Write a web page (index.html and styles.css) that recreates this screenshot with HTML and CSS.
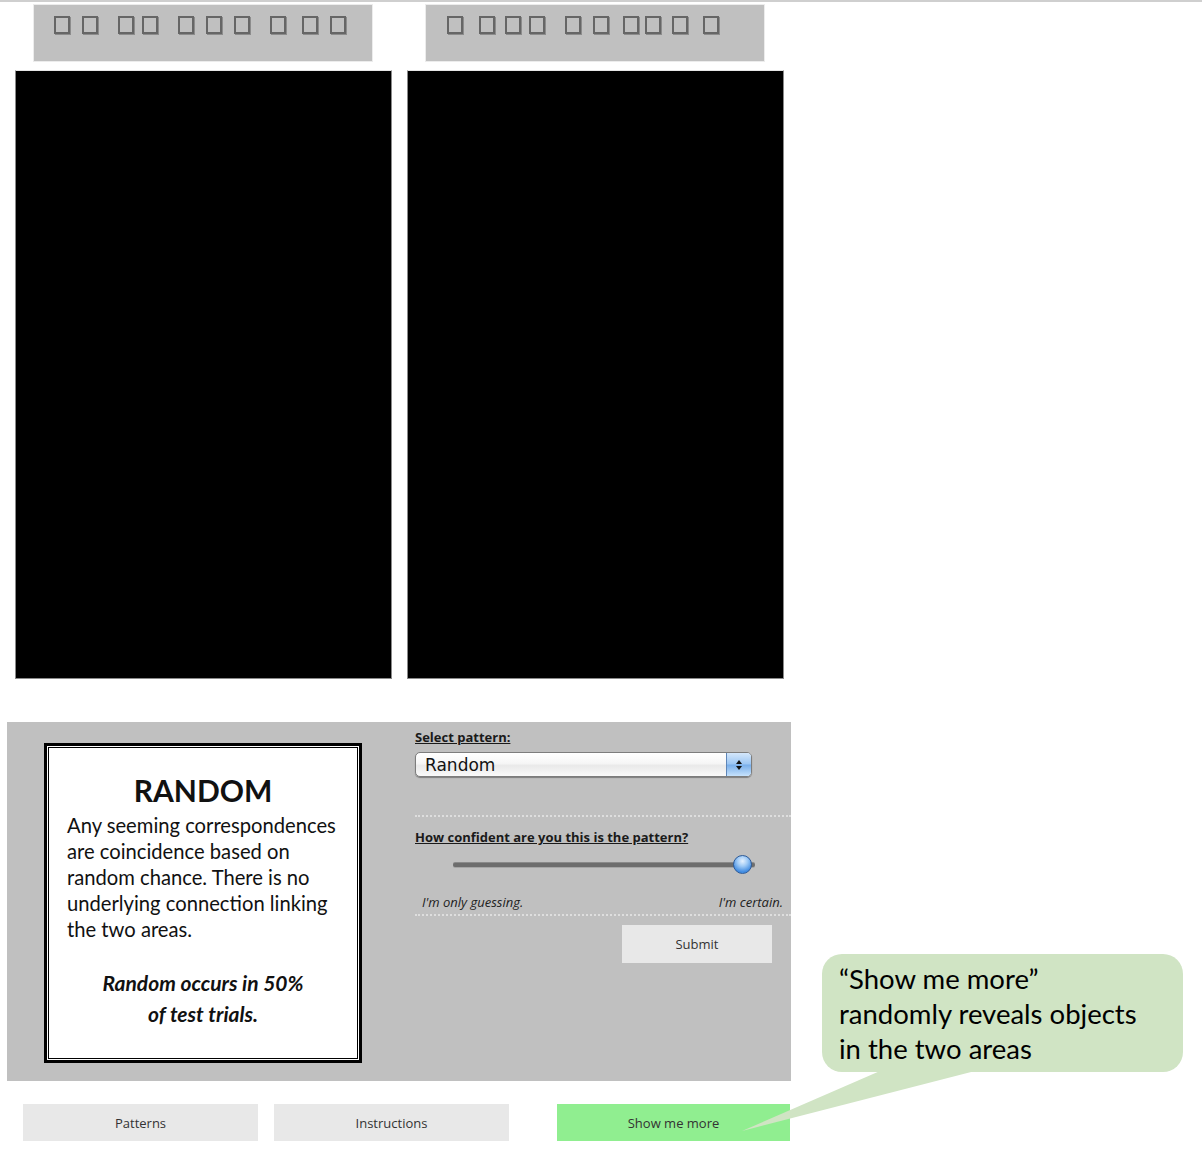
FILE: index.html
```html
<!DOCTYPE html>
<html lang="en">
<head>
<meta charset="utf-8">
<title>Pattern test</title>
<link rel="stylesheet" href="styles.css">
</head>
<body>
<div class="page">
  <div class="headers">
    <div class="hbox hbox-left">
      <span class="tofu"></span><span class="tofu g12"></span><span class="tofu g20"></span><span class="tofu g8"></span><span class="tofu g20"></span><span class="tofu g12"></span><span class="tofu g12"></span><span class="tofu g20"></span><span class="tofu g16"></span><span class="tofu g12"></span>
    </div>
    <div class="hbox hbox-right">
      <span class="tofu"></span><span class="tofu g16"></span><span class="tofu g10"></span><span class="tofu g8"></span><span class="tofu g20"></span><span class="tofu g12"></span><span class="tofu g14"></span><span class="tofu g6"></span><span class="tofu g11"></span><span class="tofu g15"></span>
    </div>
  </div>

  <div class="areas">
    <div class="area"></div>
    <div class="area"></div>
  </div>

  <div class="control">
    <div class="card">
      <div class="card-inner">
        <h1 class="card-title">RANDOM</h1>
        <p class="card-body">Any seeming correspondences are coincidence based on random chance. There is no underlying connection linking the two areas.</p>
        <p class="card-note">Random occurs in 50%<br>of test trials.</p>
      </div>
    </div>

    <div class="form">
      <div class="label">Select pattern:</div>
      <div class="select">
        <span class="select-text">Random</span>
        <span class="select-arrows">
          <svg width="8" height="12" viewBox="0 0 8 12"><path d="M4 1 L7 5 L1 5 Z M1 7 L7 7 L4 11 Z" fill="#111"/></svg>
        </span>
      </div>
      <div class="dots"></div>
      <div class="label label-q">How confident are you this is the pattern?</div>
      <div class="slider">
        <div class="track"></div>
        <div class="thumb"></div>
      </div>
      <div class="scale">
        <span>I'm only guessing.</span>
        <span>I'm certain.</span>
      </div>
      <div class="dots dots-2"></div>
      <div class="submit-row">
        <div class="btn submit">Submit</div>
      </div>
    </div>
  </div>

  <div class="buttons">
    <div class="btn bottom">Patterns</div>
    <div class="btn bottom">Instructions</div>
    <div class="btn bottom more">Show me more</div>
  </div>

  <div class="callout">“Show me more”<br>randomly reveals objects<br>in the two areas</div>
  <svg class="tail" width="260" height="80" viewBox="0 0 260 80">
    <polygon points="145,0 240,0 7,60" fill="#d0e4c4"/>
  </svg>
</div>
</body>
</html>
```

FILE: styles.css
```css
html, body {
  margin: 0;
  padding: 0;
  background: #fff;
}

body {
  font-family: "Open Sans", "Liberation Sans", sans-serif;
  color: #222;
  overflow: hidden;
}

.page {
  position: relative;
  width: 1202px;
  height: 1156px;
  border-top: 2px solid #cfcfcf;
  box-sizing: border-box;
}

/* header boxes */
.headers {
  display: flex;
  gap: 54px;
  padding-left: 34px;
  margin-top: 3px;
}

.hbox {
  width: 338px;
  height: 56px;
  background: #c0c0c0;
  display: flex;
  align-items: flex-start;
  padding-top: 11px;
  box-sizing: border-box;
  box-shadow: 0 0 0 1px #ececec;
}

.hbox-left { padding-left: 20px; }
.hbox-right { padding-left: 21px; }

.tofu {
  width: 16px;
  height: 18px;
  box-sizing: border-box;
  border: 2px solid #666;
  box-shadow: 1px 1px 0 #8c8c8c;
}

.g6 { margin-left: 6px; }
.g8 { margin-left: 8px; }
.g10 { margin-left: 10px; }
.g11 { margin-left: 11px; }
.g12 { margin-left: 12px; }
.g14 { margin-left: 14px; }
.g15 { margin-left: 15px; }
.g16 { margin-left: 16px; }
.g20 { margin-left: 20px; }

/* black areas */
.areas {
  display: flex;
  gap: 15px;
  padding-left: 15px;
  margin-top: 9px;
}

.area {
  width: 377px;
  height: 609px;
  background: #000;
  box-sizing: border-box;
  border: 1px solid #8a8a8a;
  border-top-color: #e6e6e6;
}

/* control panel */
.control {
  margin-top: 43px;
  margin-left: 7px;
  width: 784px;
  height: 359px;
  background: #c0c0c0;
  display: flex;
  align-items: flex-start;
}

.card {
  margin-top: 21px;
  margin-left: 37px;
  width: 318px;
  height: 320px;
  box-sizing: border-box;
  background: #fff;
  border: 3px solid #000;
  padding: 1px;
}

.card-inner {
  height: 100%;
  box-sizing: border-box;
  border: 1px solid #000;
  padding: 24px 8px 0 18px;
  font-family: Lato, "Open Sans", sans-serif;
  color: #111;
}

.card-title {
  margin: 0;
  font-size: 30px;
  line-height: 36px;
  font-weight: 700;
  text-align: center;
  padding-right: 10px;
}

.card-body {
  margin: 4px 0 0;
  font-size: 20.2px;
  line-height: 26px;
}

.card-note {
  margin: 25px 0 0;
  font-size: 21px;
  line-height: 31px;
  font-weight: 700;
  font-style: italic;
  text-align: center;
  padding-right: 10px;
}

/* right form */
.form {
  margin-left: 53px;
  width: 376px;
  padding-top: 7px;
}

.label {
  font-size: 13px;
  line-height: 16px;
  font-weight: 700;
  color: #1a1a1a;
  text-decoration: underline;
}

.select {
  margin-top: 7px;
  width: 337px;
  height: 25px;
  box-sizing: border-box;
  border: 1px solid #7d7d7d;
  border-radius: 5px;
  background: linear-gradient(#ffffff, #f6f6f6 45%, #e9e9e9 55%, #fafafa);
  box-shadow: 0 1px 1px rgba(0, 0, 0, 0.35);
  display: flex;
  align-items: center;
  overflow: hidden;
}

.select-text {
  flex: 1;
  padding-left: 9px;
  font-family: "DejaVu Sans", sans-serif;
  font-size: 17px;
  color: #111;
}

.select-arrows {
  width: 24px;
  height: 100%;
  border-left: 1px solid #5e86b8;
  background: linear-gradient(#d4e7fb, #9cc6f3 48%, #78aeea 52%, #c6e2fc);
  display: flex;
  align-items: center;
  justify-content: center;
}

.dots {
  margin-top: 38px;
  height: 0;
  border-top: 2px dotted #dedede;
}

.label-q {
  margin-top: 12px;
}

.slider {
  position: relative;
  margin-top: 10px;
  margin-left: 38px;
  width: 302px;
  height: 20px;
}

.track {
  position: absolute;
  left: 0;
  right: 0;
  top: 8px;
  height: 4px;
  border-radius: 2px;
  background: #6d6d6d;
  box-shadow: 0 1px 0 #a5a5a5, 0 -1px 0 #8a8a8a;
}

.thumb {
  position: absolute;
  left: 280px;
  top: 0;
  width: 19px;
  height: 19px;
  box-sizing: border-box;
  border-radius: 50%;
  border: 1px solid #2c5b9a;
  background: radial-gradient(circle at 50% 30%, #e6f2ff 0, #9fcaf6 35%, #3f8ae0 75%, #5da3f0 100%);
}

.scale {
  margin-top: 19px;
  padding: 0 8px 0 7px;
  display: flex;
  justify-content: space-between;
  font-size: 13px;
  line-height: 16px;
  font-style: italic;
  color: #222;
}

.dots-2 {
  margin-top: 4px;
}

.submit-row {
  margin-top: 9px;
  padding-left: 207px;
}

.btn {
  background: #e8e8e8;
  color: #333;
  font-size: 13px;
  display: flex;
  align-items: center;
  justify-content: center;
  box-sizing: border-box;
}

.submit {
  width: 150px;
  height: 38px;
}

/* bottom buttons */
.buttons {
  display: flex;
  margin-top: 23px;
  padding-left: 23px;
}

.bottom {
  width: 235px;
  height: 37px;
  margin-right: 16px;
}

.bottom.more {
  margin-left: 32px;
  width: 233px;
  background: #90ee90;
}

/* callout */
.callout {
  position: absolute;
  left: 822px;
  top: 952px;
  width: 361px;
  height: 118px;
  box-sizing: border-box;
  padding: 7px 0 0 17px;
  background: #d0e4c4;
  border-radius: 20px;
  font-family: Lato, "Open Sans", sans-serif;
  font-size: 27.5px;
  line-height: 35px;
  color: #000;
}

.tail {
  position: absolute;
  left: 735px;
  top: 1069px;
}
```
